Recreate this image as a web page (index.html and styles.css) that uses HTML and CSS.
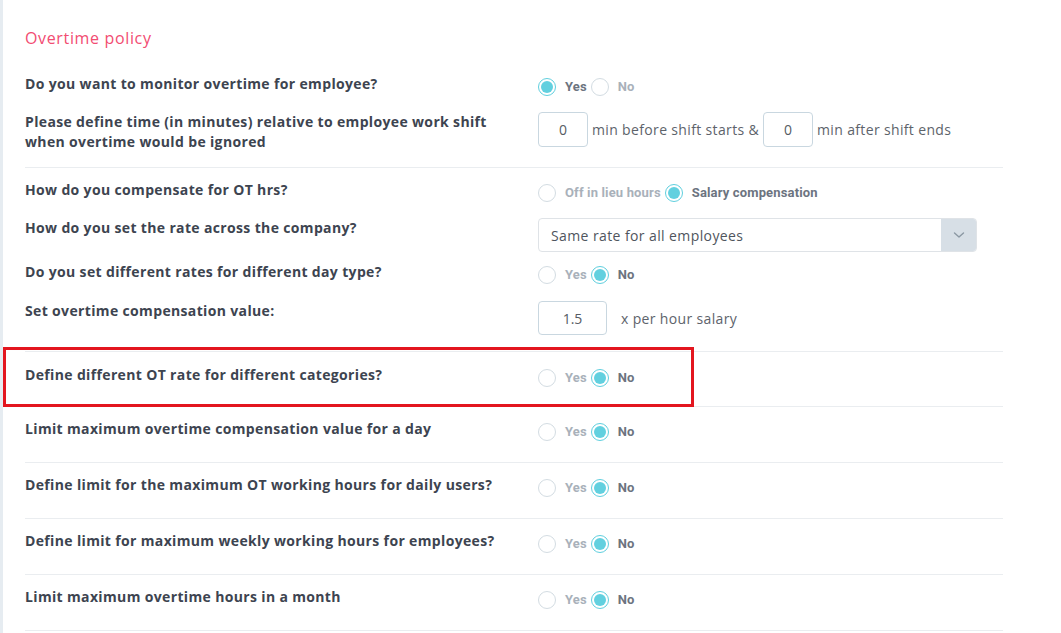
FILE: index.html
```html
<!DOCTYPE html>
<html lang="en">
<head>
<meta charset="utf-8">
<title>Overtime policy</title>
<link rel="stylesheet" href="styles.css">
</head>
<body>
<div class="panel">
  <h2 class="title">Overtime policy</h2>

  <section class="section s1">
    <div class="row r-gap">
      <div class="label">Do you want to monitor overtime for employee?</div>
      <div class="control radios">
        <span class="radio on"></span><span class="opt on">Yes</span>
        <span class="radio"></span><span class="opt">No</span>
      </div>
    </div>
    <div class="row">
      <div class="label">Please define time (in minutes) relative to employee work shift when overtime would be ignored</div>
      <div class="control inputs">
        <span class="box">0</span><span class="txt">min before shift starts &amp;</span>
        <span class="box">0</span><span class="txt">min after shift ends</span>
      </div>
    </div>
  </section>

  <section class="section s2">
    <div class="row r-gap">
      <div class="label">How do you compensate for OT hrs?</div>
      <div class="control radios">
        <span class="radio"></span><span class="opt">Off in lieu hours</span>
        <span class="radio on"></span><span class="opt on">Salary compensation</span>
      </div>
    </div>
    <div class="row r-gap-s">
      <div class="label">How do you set the rate across the company?</div>
      <div class="control">
        <div class="select">
          <span class="select-text">Same rate for all employees</span>
          <span class="select-btn">
            <svg width="12" height="8" viewBox="0 0 12 8"><path d="M1.5 2 L6 6 L10.5 2" fill="none" stroke="#8b98a3" stroke-width="1.4" stroke-linecap="round" stroke-linejoin="round"/></svg>
          </span>
        </div>
      </div>
    </div>
    <div class="row r-gap-m">
      <div class="label">Do you set different rates for different day type?</div>
      <div class="control radios">
        <span class="radio"></span><span class="opt">Yes</span>
        <span class="radio on"></span><span class="opt on">No</span>
      </div>
    </div>
    <div class="row">
      <div class="label">Set overtime compensation value:</div>
      <div class="control inputs">
        <span class="box wide">1.5</span><span class="txt far">x per hour salary</span>
      </div>
    </div>
  </section>

  <section class="section single highlighted">
    <div class="row">
      <div class="label">Define different OT rate for different categories?</div>
      <div class="control radios">
        <span class="radio"></span><span class="opt">Yes</span>
        <span class="radio on"></span><span class="opt on">No</span>
      </div>
    </div>
    <div class="highlight"></div>
  </section>

  <section class="section single">
    <div class="row">
      <div class="label">Limit maximum overtime compensation value for a day</div>
      <div class="control radios">
        <span class="radio"></span><span class="opt">Yes</span>
        <span class="radio on"></span><span class="opt on">No</span>
      </div>
    </div>
  </section>

  <section class="section single">
    <div class="row">
      <div class="label">Define limit for the maximum OT working hours for daily users?</div>
      <div class="control radios">
        <span class="radio"></span><span class="opt">Yes</span>
        <span class="radio on"></span><span class="opt on">No</span>
      </div>
    </div>
  </section>

  <section class="section single">
    <div class="row">
      <div class="label">Define limit for maximum weekly working hours for employees?</div>
      <div class="control radios">
        <span class="radio"></span><span class="opt">Yes</span>
        <span class="radio on"></span><span class="opt on">No</span>
      </div>
    </div>
  </section>

  <section class="section single">
    <div class="row">
      <div class="label">Limit maximum overtime hours in a month</div>
      <div class="control radios">
        <span class="radio"></span><span class="opt">Yes</span>
        <span class="radio on"></span><span class="opt on">No</span>
      </div>
    </div>
  </section>
</div>
</body>
</html>
```

FILE: styles.css
```css
* { box-sizing: border-box; }
html, body { margin: 0; padding: 0; background: #fff; }
body {
  font-family: "Open Sans", "Liberation Sans", sans-serif;
  color: #3d4450;
  overflow: hidden;
}
.panel {
  border-left: 3px solid #e6ecf1;
  min-height: 100vh;
  padding: 28px 0 0 22px;
}
.title {
  margin: 0;
  font-size: 16px;
  line-height: 20px;
  font-weight: 400;
  color: #f24c72;
  letter-spacing: 0.65px;
}
.section {
  width: 978px;
  border-bottom: 1px solid #eaedf0;
}
.s1 { padding: 26px 0 15px; }
.s2 { padding: 12px 0 16px; }
.single { padding: 12px 0 23px; }
.highlighted { position: relative; padding-top: 13px; padding-bottom: 21px; }
.row {
  display: grid;
  grid-template-columns: 513px 1fr;
  align-items: start;
}
.r-gap { margin-bottom: 18px; }
.r-gap-s { margin-bottom: 10px; }
.r-gap-m { margin-bottom: 19px; }
.label {
  font-size: 14px;
  line-height: 20px;
  font-weight: 700;
  color: #3d4450;
  letter-spacing: 0.35px;
  max-width: 480px;
}
.control { display: flex; align-items: center; }
.radios { height: 20px; padding-top: 4px; align-items: flex-start; }
.radio {
  width: 18px;
  height: 18px;
  border-radius: 50%;
  border: 1px solid #d3dce2;
  background: #fff;
  flex: none;
  position: relative;
}
.radio.on { border-color: #5fcfde; }
.radio.on::after {
  content: "";
  position: absolute;
  left: 2px; top: 2px;
  width: 12px; height: 12px;
  border-radius: 50%;
  background: #62d0df;
}
.opt {
  font-family: "Roboto", "Liberation Sans", sans-serif;
  font-size: 13px;
  font-weight: 700;
  color: #a9b1ba;
  letter-spacing: 0.15px;
  margin: 0 4px 0 9px;
  line-height: 18px;
}
.opt.on { color: #6c7480; }
.inputs { align-items: center; }
.box {
  width: 50px;
  height: 35px;
  border: 1px solid #c9d7e0;
  border-radius: 4px;
  display: flex;
  align-items: center;
  justify-content: center;
  font-size: 14px;
  color: #565c64;
  flex: none;
}
.box.wide { width: 69px; height: 34px; }
.txt {
  font-size: 14px;
  color: #5d636b;
  letter-spacing: 0.35px;
  margin: 0 4px;
}
.txt.far { margin-left: 14px; }
.select {
  width: 439px;
  height: 34px;
  border: 1px solid #dfe3e7;
  border-radius: 4px;
  display: flex;
  align-items: stretch;
  overflow: hidden;
}
.select-text {
  flex: 1;
  display: flex;
  align-items: center;
  padding-left: 12px;
  font-size: 14px;
  letter-spacing: 0.4px;
  color: #4f555d;
}
.select-btn {
  width: 35px;
  background: #d7dfe6;
  display: flex;
  align-items: center;
  justify-content: center;
}
.highlight {
  position: absolute;
  left: -22px;
  top: -5px;
  width: 691px;
  height: 60px;
  border: 3px solid #e3161f;
  pointer-events: none;
}
```
